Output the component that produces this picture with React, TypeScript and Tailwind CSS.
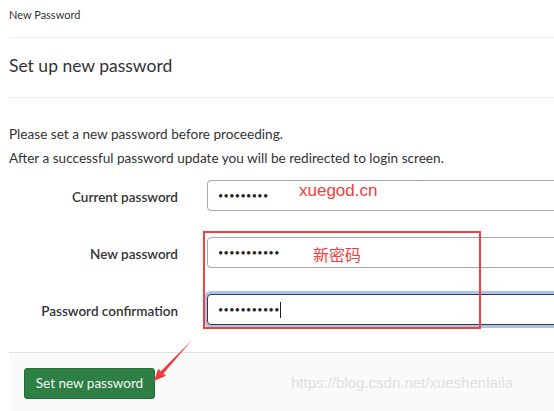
function Field({ dots, focused, caret }: { dots: number; focused?: boolean; caret?: boolean }) {
  return (
    <div
      className={
        'ml-[29px] h-[31px] w-[400px] shrink-0 rounded-[4px] border bg-white pl-[10px] flex items-center ' +
        (focused ? 'border-[#3a3a3a] ring-[3px] ring-[#a9c4ec]' : 'border-[#a8a8a8]')
      }
    >
      <span className="text-[9px] tracking-[0.4px] text-[#222]">{'•'.repeat(dots)}</span>
      {caret && <span className="h-[16px] w-px bg-[#222]" />}
    </div>
  )
}

function Row({ label, children }: { label: string; children: React.ReactNode }) {
  return (
    <div className="flex items-center">
      <label className="w-[169px] shrink-0 pt-[4px] text-right text-[13.5px] font-semibold text-[#333]">{label}</label>
      {children}
    </div>
  )
}

function App() {
  return (
    <div
      className="relative h-[411px] w-[554px] overflow-hidden bg-white text-[#333]"
      style={{ fontFamily: 'Lato, "Noto Sans", sans-serif' }}
    >
      <div className="pl-[9px]">
        <div className="h-[38px] border-b border-[#ececec] pt-[7px] text-[11px] leading-[16px]">New Password</div>
        <h3 className="flex h-[60px] items-center border-b border-[#ececec] pb-[3px] text-[17.5px] leading-none">
          Set up new password
        </h3>
        <div className="mt-[24px] text-[13.6px] leading-[24px]">
          <p>Please set a new password before proceeding.</p>
          <p>After a successful password update you will be redirected to login screen.</p>
        </div>

        <div className="mt-[10px] flex flex-col gap-[26px]">
          <Row label="Current password">
            <Field dots={9} />
          </Row>
          <Row label="New password">
            <Field dots={11} />
          </Row>
          <Row label="Password confirmation">
            <Field dots={11} focused caret />
          </Row>
        </div>

        <div className="mt-[27px] h-[100px] border-t border-[#e2e2e2] bg-[#fafafa] pl-[15px] pt-[15px]">
          <button className="h-[31px] w-[131px] rounded-[3px] border border-[#276d3a] bg-[#2e7f43] text-[13.5px] text-[#f4f4f4]">
            Set new password
          </button>
        </div>
      </div>

      {/* annotations */}
      <div className="absolute left-[203px] top-[231px] h-[98px] w-[278px] border-2 border-[#f43f3f]" />
      <span
        className="absolute left-[299px] top-[181px] text-[17px] leading-[20px] text-[#f53b3b]"
        style={{ fontFamily: '"Liberation Sans", sans-serif' }}
      >
        xuegod.cn
      </span>
      <span
        className="absolute left-[313px] top-[244px] text-[16px] leading-[20px] text-[#f53b3b]"
        style={{ fontFamily: '"Noto Sans CJK SC", sans-serif' }}
      >
        新密码
      </span>
      <svg className="absolute left-0 top-0" width="554" height="411" viewBox="0 0 554 411">
        <polygon
          points="192,340 163.4,373.4 166,375.8 154,381 158.2,368.8 160.8,371.2"
          fill="#f23a3a"
        />
      </svg>
      <span
        className="absolute left-[291px] top-[373px] text-[15px] leading-[20px] text-[#e0e0e0]"
        style={{ fontFamily: '"Liberation Sans", sans-serif' }}
      >
        https://blog.csdn.net/xueshenlaila
      </span>
    </div>
  )
}

export default App
